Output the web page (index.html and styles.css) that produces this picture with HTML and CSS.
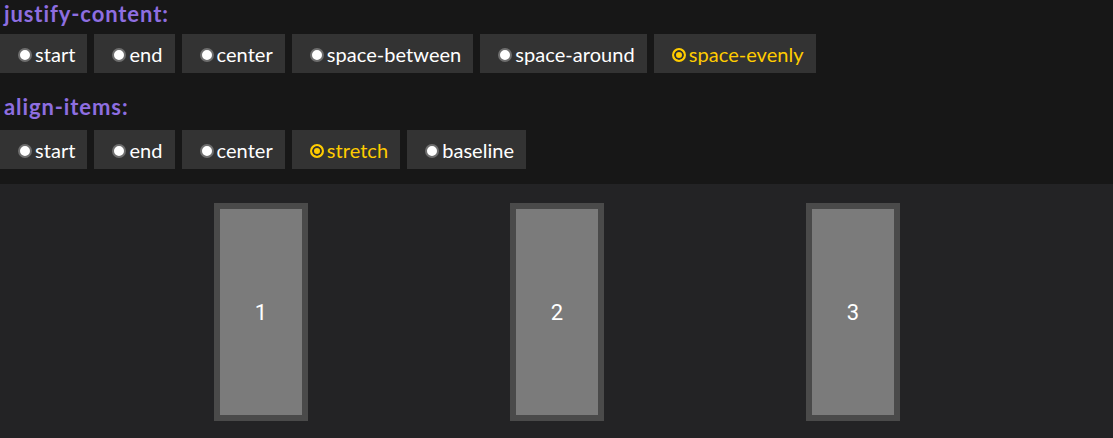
FILE: index.html
```html
<!DOCTYPE html>
<html>
<head>
<meta charset="utf-8">
<link rel="stylesheet" href="styles.css">
</head>
<body>
<div class="controls">
  <div class="heading h1">justify-content:</div>
  <div class="options row1">
    <label class="opt"><span class="radio"></span>start</label>
    <label class="opt"><span class="radio"></span>end</label>
    <label class="opt"><span class="radio"></span>center</label>
    <label class="opt"><span class="radio"></span>space-between</label>
    <label class="opt"><span class="radio"></span>space-around</label>
    <label class="opt on"><span class="radio"></span>space-evenly</label>
  </div>
  <div class="heading h2">align-items:</div>
  <div class="options row2">
    <label class="opt"><span class="radio"></span>start</label>
    <label class="opt"><span class="radio"></span>end</label>
    <label class="opt"><span class="radio"></span>center</label>
    <label class="opt on"><span class="radio"></span>stretch</label>
    <label class="opt"><span class="radio"></span>baseline</label>
  </div>
</div>
<div class="demo">
  <div class="box">1</div>
  <div class="box">2</div>
  <div class="box">3</div>
</div>
</body>
</html>
```

FILE: styles.css
```css
html, body {
  margin: 0;
  padding: 0;
  background: #171717;
  overflow: hidden;
}
body {
  font-family: "Lato", "Noto Sans", sans-serif;
  color: #fff;
}
.controls {
  padding-top: 2px;
  padding-bottom: 15px;
}
.heading {
  font-weight: 700;
  font-size: 22px;
  line-height: 24px;
  color: #8e6ee0;
  padding-left: 4px;
  letter-spacing: 0.9px;
}
.h1 { margin-bottom: 8px; }
.h2 { margin-bottom: 11px; }
.options {
  display: flex;
  gap: 7px;
}
.row1 { margin-bottom: 22px; }
.opt {
  display: flex;
  align-items: center;
  height: 39px;
  padding: 0 12px 0 18px;
  background: #333333;
  font-size: 20px;
  letter-spacing: 0.05px;
  color: #fff;
}
.radio {
  width: 14px;
  height: 14px;
  flex: none;
  box-sizing: border-box;
  border-radius: 50%;
  background: #fff;
  border: 2px solid #6e6e6e;
  margin: 3px 3px 0 0;
}
.opt.on { color: #ffcc00; }
.opt.on .radio {
  background: #ffcc00;
  border: 2px solid #ffcc00;
  box-shadow: inset 0 0 0 2px #333333;
}
.demo {
  background: #232325;
  height: 254px;
  box-sizing: border-box;
  padding: 19px 11px 17px 12px;
  display: flex;
  justify-content: space-evenly;
  align-items: stretch;
}
.box {
  width: 94px;
  box-sizing: border-box;
  border: 6px solid #4a4a4a;
  background: #7b7b7b;
  display: flex;
  align-items: center;
  justify-content: center;
  font-family: "Roboto", sans-serif;
  font-size: 22px;
  color: #fff;
}
```
